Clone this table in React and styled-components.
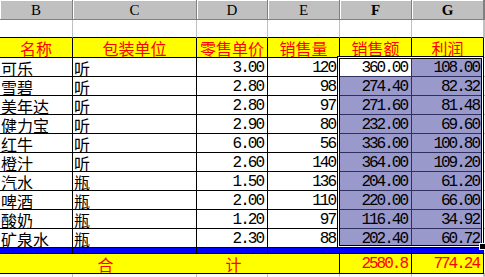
import React from 'react';
import styled, { createGlobalStyle, css } from 'styled-components';

const GlobalStyle = createGlobalStyle`
  body {
    margin: 0;
    background: #fff;
    overflow: hidden;
  }
`;

const CJK = `"Noto Sans CJK SC", "Noto Sans", sans-serif`;
const MONO = `"Liberation Mono", "DejaVu Sans Mono", monospace`;

const Sheet = styled.div`
  position: relative;
  display: grid;
  grid-template-columns: 73px 124px 71px 72px 72px 72px 1fr;
  width: 485px;
  height: 277px;
  overflow: hidden;
`;

const HeadCell = styled.div`
  box-sizing: border-box;
  height: 20px;
  background: #c0c0c0;
  border-right: 1px solid #808080;
  border-bottom: 1px solid #808080;
  box-shadow: inset 1px 1px 0 #fff;
  display: flex;
  align-items: center;
  justify-content: center;
  font-family: "Liberation Serif", serif;
  font-size: 15px;
  line-height: 16px;
  font-weight: ${p => (p.$bold ? 700 : 400)};
  color: #000;
`;

const BlankCell = styled.div`
  box-sizing: border-box;
  height: 18px;
  border-right: 1px solid #c0c0c0;
  border-bottom: 1px solid ${p => (p.$edge ? '#c0c0c0' : '#000')};
`;

const TitleCell = styled.div`
  box-sizing: border-box;
  height: 20px;
  background: #ffff00;
  border-right: 1px solid #000;
  border-bottom: 1px solid #000;
  display: flex;
  align-items: center;
  justify-content: center;
  font-family: ${CJK};
  font-size: 16px;
  line-height: 16px;
  color: #ff0000;
`;

const tones = {
  plain: css`
    background: #fff;
    border-color: #000;
  `,
  sel: css`
    background: #9999cc;
    border-color: #303060;
  `,
  active: css`
    background: #fff;
    border-color: #303060;
  `,
};

const Cell = styled.div`
  box-sizing: border-box;
  height: 19px;
  border-right: 1px solid;
  border-bottom: 1px solid;
  ${p => tones[p.$tone || 'plain']}
  display: flex;
  align-items: center;
  justify-content: ${p => (p.$num ? 'flex-end' : 'flex-start')};
  padding: ${p => (p.$num ? '1px 4px 0 0' : '1px 0 0 1px')};
  font-family: ${p => (p.$num ? MONO : CJK)};
  font-size: 16px;
  letter-spacing: ${p => (p.$num ? '-2px' : '0')};
  line-height: 16px;
  color: #000;
  white-space: nowrap;
`;

const EdgeCell = styled.div`
  box-sizing: border-box;
  height: ${p => p.$h}px;
  border-bottom: 1px solid #c0c0c0;
`;

const Band = styled.div`
  box-sizing: border-box;
  height: 6px;
  background: #0000ff;
  border-right: 1px solid #000;
  border-bottom: 1px solid #000;
`;

const TotalLabel = styled.div`
  grid-column: span 4;
  box-sizing: border-box;
  height: 20px;
  background: #ffff00;
  border-right: 1px solid #000;
  border-bottom: 1px solid #000;
  display: flex;
  align-items: center;
  justify-content: center;
  font-family: ${CJK};
  font-size: 16px;
  line-height: 16px;
  color: #ff0000;
  white-space: pre;
`;

const TotalCell = styled.div`
  box-sizing: border-box;
  height: 20px;
  background: #ffff00;
  border-right: 1px solid #000;
  border-bottom: 1px solid #000;
  display: flex;
  align-items: center;
  justify-content: flex-end;
  padding: 1px 4px 0 0;
  font-family: ${MONO};
  font-size: 16px;
  line-height: 16px;
  letter-spacing: -2px;
  color: #ff0000;
`;

const Pad = styled.div`
  height: 10px;
  border-right: 1px solid #c0c0c0;
`;

/* selection outline drawn over the F..G data block */
const Selection = styled.div`
  position: absolute;
  left: 337px;
  top: 56px;
  width: 147px;
  height: 192px;
  box-sizing: border-box;
  border: 1px solid #000;
  box-shadow: inset 0 0 0 1px #fff, inset 0 0 0 2px #000;
  pointer-events: none;
`;

const FillHandle = styled.div`
  position: absolute;
  right: -3px;
  bottom: -3px;
  width: 5px;
  height: 5px;
  background: #000;
  border: 1px solid #fff;
`;

const letters = ['B', 'C', 'D', 'E', 'F', 'G'];
const titles = ['名称', '包装单位', '零售单价', '销售量', '销售额', '利润'];

const rows = [
  ['可乐', '听', '3.00', '120', '360.00', '108.00'],
  ['雪碧', '听', '2.80', '98', '274.40', '82.32'],
  ['美年达', '听', '2.80', '97', '271.60', '81.48'],
  ['健力宝', '听', '2.90', '80', '232.00', '69.60'],
  ['红牛', '听', '6.00', '56', '336.00', '100.80'],
  ['橙汁', '听', '2.60', '140', '364.00', '109.20'],
  ['汽水', '瓶', '1.50', '136', '204.00', '61.20'],
  ['啤酒', '瓶', '2.00', '110', '220.00', '66.00'],
  ['酸奶', '瓶', '1.20', '97', '116.40', '34.92'],
  ['矿泉水', '瓶', '2.30', '88', '202.40', '60.72'],
];

function toneFor(rowIdx, colIdx) {
  if (colIdx < 4) return 'plain';
  if (rowIdx === 0 && colIdx === 4) return 'active';
  return 'sel';
}

export default function App() {
  return (
    <>
      <GlobalStyle />
      <Sheet>
        {letters.map(l => (
          <HeadCell key={l} $bold={l === 'F' || l === 'G'}>{l}</HeadCell>
        ))}
        <HeadCell />

        {letters.map(l => <BlankCell key={l} />)}
        <BlankCell $edge />

        {titles.map(t => <TitleCell key={t}>{t}</TitleCell>)}
        <EdgeCell $h={20} />

        {rows.map((r, ri) => (
          <React.Fragment key={r[0]}>
            {r.map((v, ci) => (
              <Cell key={ci} $num={ci > 1} $tone={toneFor(ri, ci)}>{v}</Cell>
            ))}
            <EdgeCell $h={19} />
          </React.Fragment>
        ))}

        {letters.map(l => <Band key={l} />)}
        <EdgeCell $h={6} />

        <TotalLabel>{'合\u3000\u3000\u3000\u3000\u3000\u3000\u3000计'}</TotalLabel>
        <TotalCell>2580.8</TotalCell>
        <TotalCell>774.24</TotalCell>
        <EdgeCell $h={20} />

        {letters.map(l => <Pad key={l} />)}
        <Pad />

        <Selection>
          <FillHandle />
        </Selection>
      </Sheet>
    </>
  );
}
